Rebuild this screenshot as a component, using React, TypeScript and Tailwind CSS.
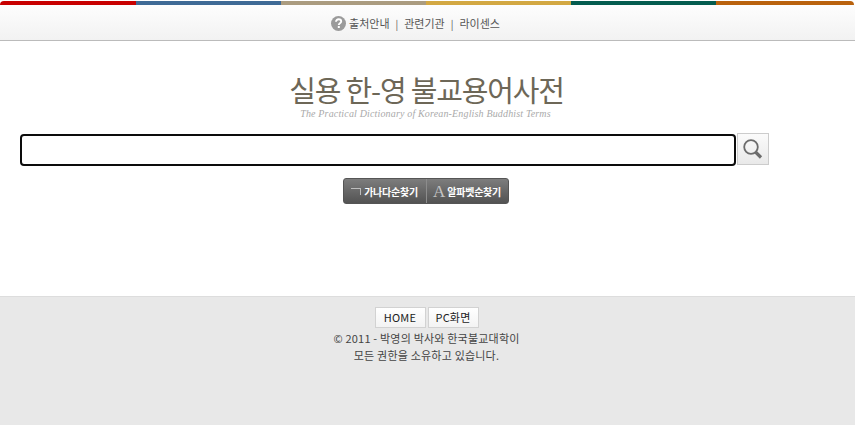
const font = "font-['Noto_Sans_CJK_KR','Liberation_Sans',sans-serif]";

const bars = [
  { id: "red", className: "w-[136px] bg-[#c80000] rounded-tl-[5px]" },
  { id: "blue", className: "w-[145px] bg-[#3f6a96]" },
  { id: "tan", className: "w-[145px] bg-[#ab9c80]" },
  { id: "gold", className: "w-[145px] bg-[#d3a843]" },
  { id: "green", className: "w-[145px] bg-[#045c4f]" },
  { id: "orange", className: "flex-1 bg-[#b9620d] rounded-tr-[5px]" },
];

const HelpIcon = () => (
  <svg width="15" height="15" viewBox="0 0 15 15" className="shrink-0">
    <circle cx="7.5" cy="7.5" r="7.5" fill="#9b9b9b" />
    <path
      d="M5 5.8C5 4.2 6.2 3.3 7.6 3.3C9.1 3.3 10.2 4.2 10.2 5.5C10.2 7.3 7.8 7.3 7.8 9"
      fill="none"
      stroke="#fff"
      strokeWidth="1.9"
    />
    <rect x="6.8" y="10" width="2" height="2" fill="#fff" />
  </svg>
);

const SearchIcon = () => (
  <svg width="22" height="22" viewBox="0 0 22 22">
    <circle cx="9" cy="9" r="6.8" fill="none" stroke="#6c6c6c" strokeWidth="1.8" />
    <path d="M13.5 14L19 19.5" stroke="#6c6c6c" strokeWidth="3.2" />
  </svg>
);

const App = () => {
  return (
    <div className={`${font} flex flex-col h-screen w-full bg-white text-[#333]`}>
      <div className="flex h-[41px] flex-col pt-px pr-px bg-gradient-to-b from-white to-[#f2f2f2] border-b border-[#bbbbbb]">
        <div className="flex h-1 shrink-0">
          {bars.map((bar) => (
            <div key={bar.id} className={bar.className} />
          ))}
        </div>
        <div className="flex flex-1 items-center justify-center gap-[6px] pt-px pr-[23px] text-[11px] text-[#555]">
          <HelpIcon />
          <span className="-ml-[3px]">출처안내</span>
          <span className="text-[10px]">|</span>
          <span>관련기관</span>
          <span className="text-[10px]">|</span>
          <span>라이센스</span>
        </div>
      </div>

      <main className="h-[255px] shrink-0">
        <div className="flex flex-col items-center pt-[30px] pr-[2px]">
          <h1 className="text-[29px] leading-[37px] font-normal tracking-[-1.2px] text-[#6d6757] whitespace-nowrap">
            실용 한-영 불교용어사전
          </h1>
          <p className="font-['Liberation_Serif',serif] italic text-[10px] leading-[12px] tracking-[0.16px] pr-[2px] text-[#aaaaaa]">
            The Practical Dictionary of Korean-English Buddhist Terms
          </p>
        </div>

        <div className="flex items-start gap-px ml-5 mt-[13px] w-[749px]">
          <input
            type="text"
            className="mt-px h-[32px] flex-1 rounded-[4px] border-2 border-[#0c0c0c] bg-white outline-none"
          />
          <button className="flex h-[32px] w-[32px] items-center justify-center border border-[#cccccc] bg-gradient-to-b from-[#fbfbfb] to-[#e9e9e9]">
            <SearchIcon />
          </button>
        </div>

        <div className="flex justify-center mt-[12px] pr-[4px]">
          <div className="flex h-[26px] w-[166px] rounded-[3px] border border-[#555555] bg-gradient-to-b from-[#7d7d7d] to-[#535353] text-[10px] font-bold text-white">
            <button className="flex w-[83px] items-center justify-center gap-[3px] border-r border-[#8c8c8c]">
              <span className="h-[7px] w-[10px] border-t border-r border-[#bdbdbd]" />
              <span className="tracking-[-0.25px]">가나다순찾기</span>
            </button>
            <button className="flex flex-1 items-center justify-center gap-[2px]">
              <span className="font-['Liberation_Serif',serif] text-[17px] font-normal leading-none text-[#c4c4c4]">
                A
              </span>
              <span className="tracking-[-0.25px]">알파벳순찾기</span>
            </button>
          </div>
        </div>
      </main>

      <footer className="flex-1 border-t border-[#dddddd] bg-[#e8e8e8] pt-[10px] pr-[2px] text-center text-[11px] tracking-[0.2px] text-[#444]">
        <div className="flex justify-center gap-[2px]">
          <button className="h-[21px] w-[51px] border border-[#d2d2d2] bg-gradient-to-b from-white to-[#f3f3f3] text-[11px] text-[#222]">
            HOME
          </button>
          <button className="h-[21px] w-[51px] border border-[#d2d2d2] bg-gradient-to-b from-white to-[#f3f3f3] text-[11px] text-[#222]">
            PC화면
          </button>
        </div>
        <p className="mt-[2px] leading-[17px]">© 2011 - 박영의 박사와 한국불교대학이</p>
        <p className="leading-[17px]">모든 권한을 소유하고 있습니다.</p>
      </footer>
    </div>
  );
};

export default App;
